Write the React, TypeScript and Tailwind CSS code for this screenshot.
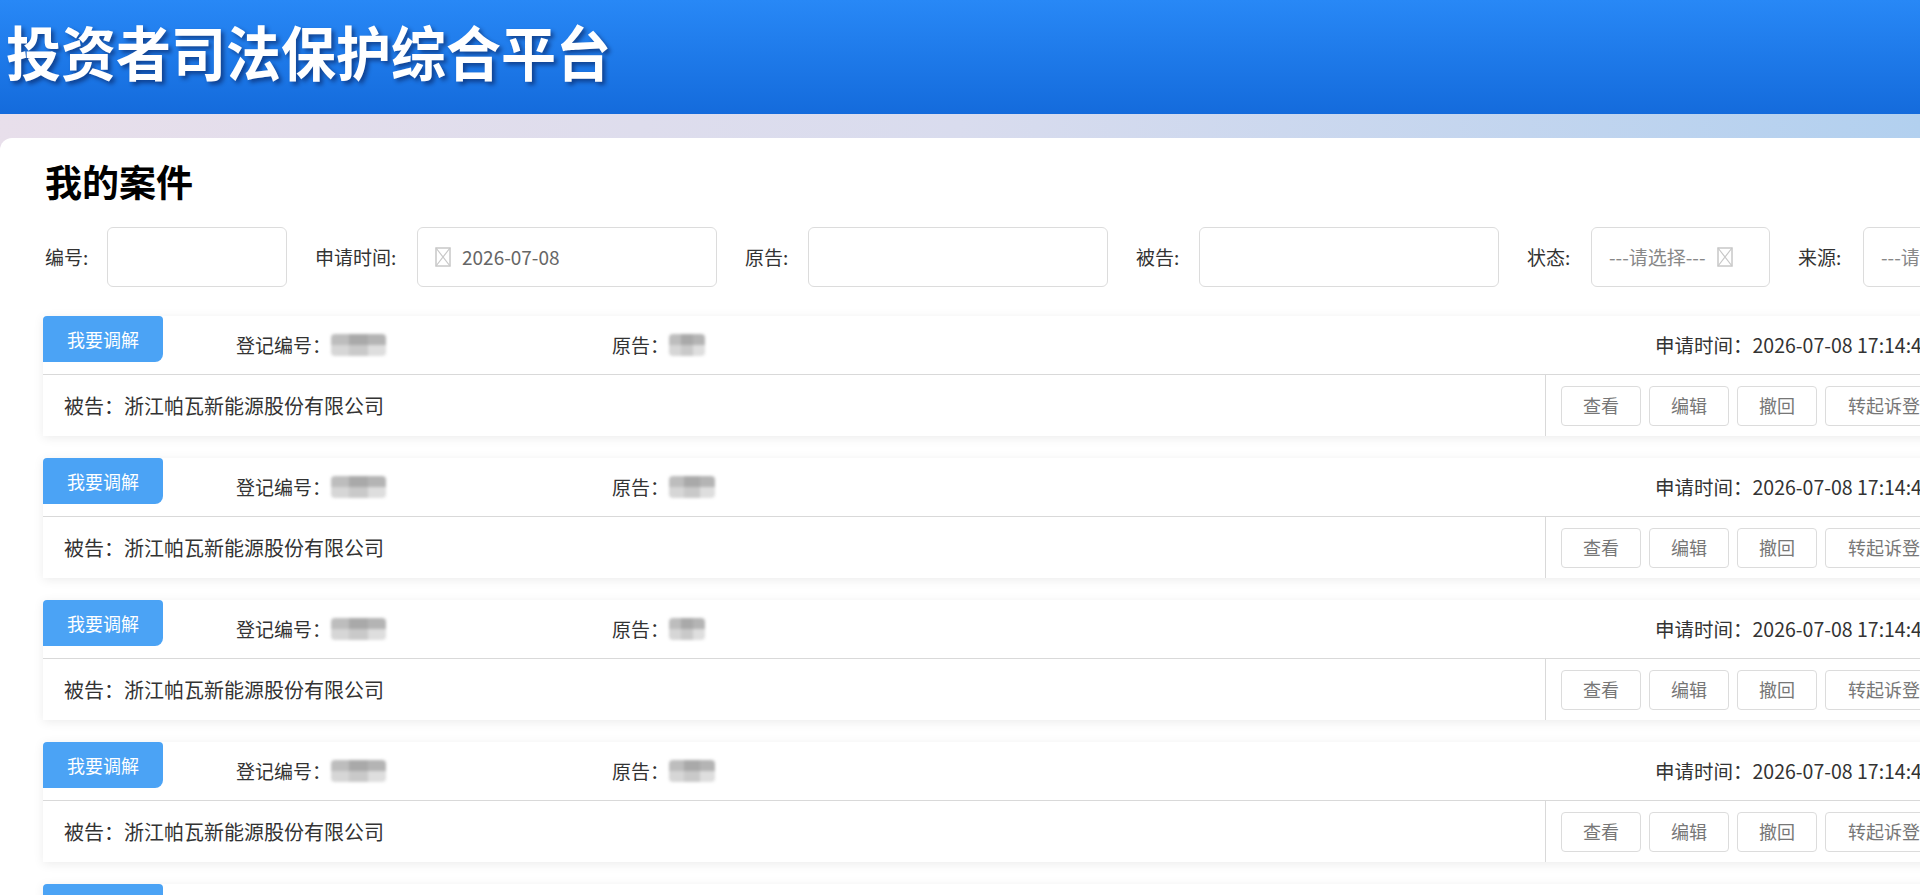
const font = { fontFamily: '"Noto Sans CJK SC", "Noto Sans", sans-serif' };

const BrokenIcon = () => (
  <svg width="16" height="20" viewBox="0 0 16 20" className="shrink-0">
    <rect x="1" y="1" width="14" height="18" fill="none" stroke="#c8c8c8" strokeWidth="1.5" />
    <path d="M1 1 L15 19 M15 1 L1 19" stroke="#c8c8c8" strokeWidth="1.2" />
  </svg>
);

const Mosaic = ({ w }: { w: number }) => (
  <div className="flex flex-col blur-[1.5px] rounded-[4px] overflow-hidden" style={{ width: w }}>
    <div className="flex h-[11px]">
      <div className="flex-1 bg-[#bdbdbd]" />
      <div className="flex-1 bg-[#a9a9a9]" />
      <div className="flex-1 bg-[#b4b4b4]" />
    </div>
    <div className="flex h-[11px]">
      <div className="flex-1 bg-[#d6d6d6]" />
      <div className="flex-1 bg-[#c9c9c9]" />
      <div className="flex-1 bg-[#dedede]" />
    </div>
  </div>
);

const Field = ({ label, lw, iw, children }: { label: string; lw: number; iw: number; children?: React.ReactNode }) => (
  <div className="flex items-center shrink-0">
    <span className="text-[19px] text-[#333]" style={{ width: lw }}>{label}</span>
    <div
      className="h-[60px] border border-[#dcdcdc] rounded-[6px] bg-white flex items-center px-[17px] gap-[11px] text-[19px] text-[#666]"
      style={{ width: iw }}
    >
      {children}
    </div>
  </div>
);

const CaseCard = ({ pw }: { pw: number }) => (
  <div className="w-[1900px] h-[120px] bg-white shadow-[0_2px_10px_rgba(0,0,0,0.08)] flex flex-col shrink-0">
    <div className="h-[59px] flex items-start border-b border-[#d9d9d9]">
      <div className="w-[120px] h-[46px] shrink-0 bg-[#4ba3f5] text-white text-[18px] flex items-center justify-center rounded-tl-[4px] rounded-tr-[4px] rounded-br-[8px]">
        我要调解
      </div>
      <div className="flex items-center h-full w-[376px] shrink-0 text-[19px] text-[#333] ml-[73px]">
        <span>登记编号：</span>
        <span><Mosaic w={55} /></span>
      </div>
      <div className="flex items-center h-full w-[1043px] shrink-0 text-[19px] text-[#333]">
        <span>原告：</span>
        <span><Mosaic w={pw} /></span>
      </div>
      <div className="flex items-center h-full text-[19.5px] text-[#333] whitespace-nowrap">
        申请时间：2026-07-08 17:14:45
      </div>
    </div>
    <div className="flex-1 flex items-stretch">
      <div className="w-[1502px] shrink-0 flex items-center pl-[21px] text-[20px] text-[#333]">被告：浙江帕瓦新能源股份有限公司</div>
      <div className="flex-1 border-l border-[#d9d9d9] flex items-center pl-[15px] gap-[8px]">
        {["查看", "编辑", "撤回"].map((b) => (
          <button
            key={b}
            className="h-[40px] w-[80px] border border-[#dcdcdc] rounded-[4px] bg-white text-[18px] text-[#777] whitespace-nowrap"
          >
            {b}
          </button>
        ))}
        <button className="h-[40px] px-[22px] border border-[#dcdcdc] rounded-[4px] bg-white text-[18px] text-[#777] whitespace-nowrap">
          转起诉登记
        </button>
      </div>
    </div>
  </div>
);

export default function App() {
  return (
    <div className="w-[1920px] h-[895px] overflow-hidden bg-white" style={font}>
      {/* Header */}
      <div className="h-[114px] bg-gradient-to-b from-[#2888f6] to-[#146bdc] flex items-start pl-[6px] pt-[12px]">
        <h1 className="text-[55px] leading-[72px] font-bold text-white scale-y-[1.07] origin-top-left [text-shadow:3px_3px_4px_rgba(0,0,40,0.45)]">
          投资者司法保护综合平台
        </h1>
      </div>

      <div className="bg-gradient-to-r from-[#e8dfeb] via-[#d9dcee] to-[#b2d0ef] pt-[24px]">
        <div className="bg-white rounded-tl-[12px] h-[757px] overflow-hidden pl-[43px]">
          {/* Title */}
          <h2 className="pl-[2px] pt-[17px] text-[37px] leading-[52px] font-bold text-black">我的案件</h2>

          {/* Filters */}
          <div className="flex items-center gap-[28px] mt-[20px] pl-[2px]">
            <Field label="编号:" lw={62} iw={180} />
            <Field label="申请时间:" lw={102} iw={300}>
              <BrokenIcon />
              <span>2026-07-08</span>
            </Field>
            <Field label="原告:" lw={63} iw={300} />
            <Field label="被告:" lw={63} iw={300} />
            <Field label="状态:" lw={64} iw={179}>
              <span className="text-[#888] whitespace-nowrap">---请选择---</span>
              <BrokenIcon />
            </Field>
            <Field label="来源:" lw={65} iw={180}>
              <span className="text-[#888] whitespace-nowrap">---请选择---</span>
            </Field>
          </div>

          {/* Case list */}
          <div className="flex flex-col gap-[22px] mt-[29px]">
            <CaseCard pw={36} />
            <CaseCard pw={46} />
            <CaseCard pw={36} />
            <CaseCard pw={46} />
            <CaseCard pw={46} />
          </div>
        </div>
      </div>
    </div>
  );
}
